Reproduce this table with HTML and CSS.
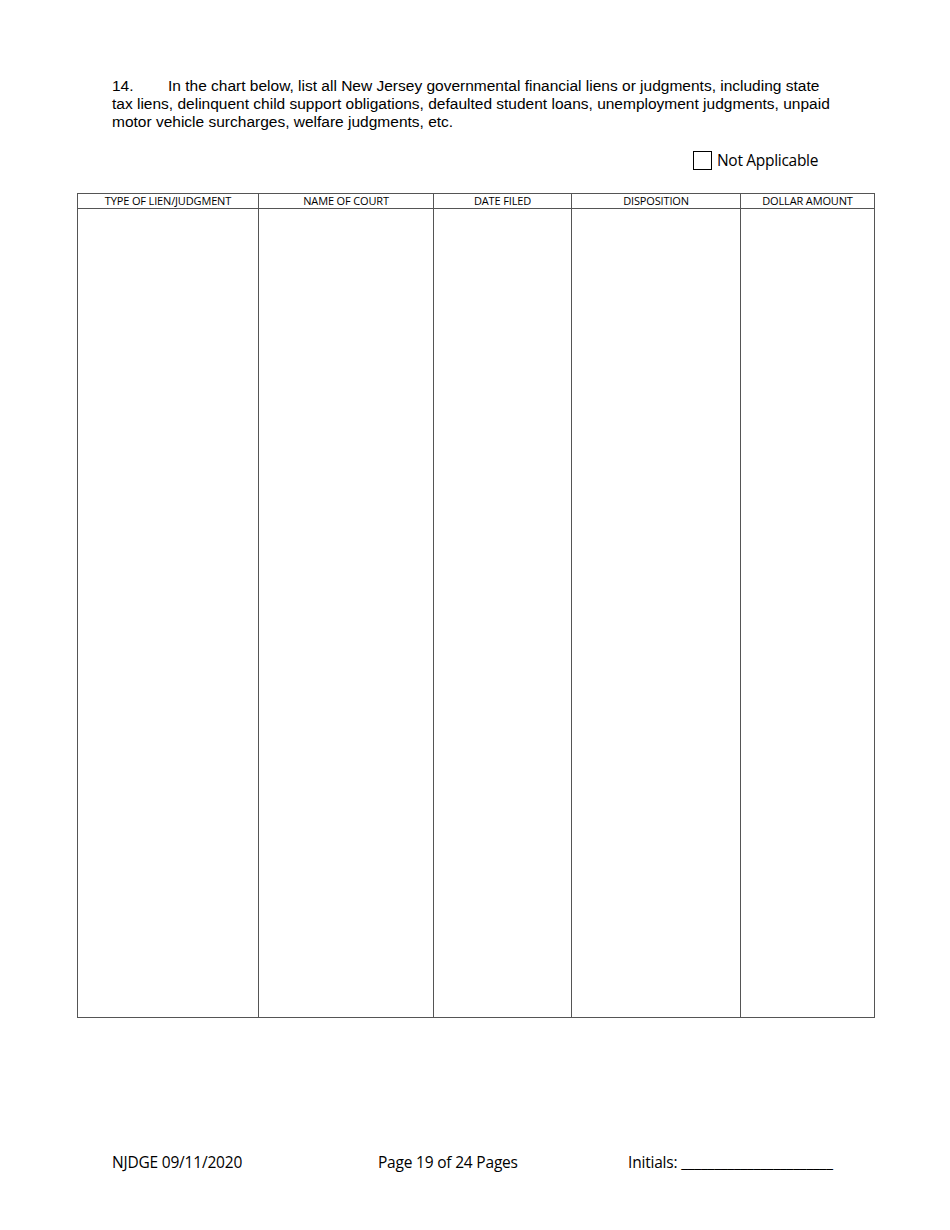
FILE: index.html
```html
<!DOCTYPE html>
<html>
<head>
<meta charset="utf-8">
<link rel="stylesheet" href="styles.css">
</head>
<body>
<div class="page">
  <p class="intro">14.&#9;In the chart below, list all New Jersey governmental financial liens or judgments, including state tax liens, delinquent child support obligations, defaulted student loans, unemployment judgments, unpaid motor vehicle surcharges, welfare judgments, etc.</p>
  <div class="na-row"><span class="box"></span><span class="na-text">Not Applicable</span></div>
  <table class="chart">
    <colgroup>
      <col class="c1"><col class="c2"><col class="c3"><col class="c4"><col class="c5">
    </colgroup>
    <thead>
      <tr><th>TYPE OF LIEN/JUDGMENT</th><th>NAME OF COURT</th><th>DATE FILED</th><th>DISPOSITION</th><th>DOLLAR AMOUNT</th></tr>
    </thead>
    <tbody>
      <tr class="body-row"><td></td><td></td><td></td><td></td><td></td></tr>
    </tbody>
  </table>
  <div class="footer">
    <span class="f1">NJDGE 09/11/2020</span>
    <span class="f2">Page 19 of 24 Pages</span>
    <span class="f3">Initials: _______________________</span>
  </div>
</div>
</body>
</html>
```
FILE: styles.css
```css
html, body { margin: 0; padding: 0; background: #fff; }
.page { width: 950px; height: 1230px; position: relative; color: #000; }
.intro {
  margin: 0 0 0 112px;
  padding-top: 77px;
  width: 722px;
  font-family: "Liberation Sans", Arial, sans-serif;
  font-size: 15.5px;
  line-height: 18px;
  white-space: pre-wrap;
  tab-size: 56px;
  -moz-tab-size: 56px;
}
.na-row {
  display: flex;
  align-items: center;
  margin: 19px 0 0 693px;
  height: 20px;
  font-family: "Open Sans", "Noto Sans", sans-serif;
  font-size: 15.5px;
}
.box { border: 1px solid #000; box-sizing: border-box; width: 19px; height: 19px; margin-right: 5px; }
.na-text { letter-spacing: -0.3px; }
.chart {
  margin: 23px 0 0 77px;
  width: 797px;
  border-collapse: collapse;
  table-layout: fixed;
}
.c1 { width: 181px; } .c2 { width: 175px; } .c3 { width: 138px; } .c4 { width: 169px; } .c5 { width: 134px; }
.chart th, .chart td { border: 1px solid #555; padding: 0; }
.chart th {
  font-family: "Open Sans", "Noto Sans", sans-serif;
  font-weight: normal;
  font-size: 11px;
  height: 14px;
  line-height: 14px;
  letter-spacing: -0.15px;
}
.body-row td { height: 808px; }
.footer {
  position: absolute;
  top: 1151px;
  left: 0;
  width: 950px;
  display: flex;
  font-family: "Open Sans", "Noto Sans", sans-serif;
  font-size: 15.5px;
  letter-spacing: -0.2px;
}
.f1 { margin-left: 112px; width: 266px; }
.f2 { width: 250px; }
```
